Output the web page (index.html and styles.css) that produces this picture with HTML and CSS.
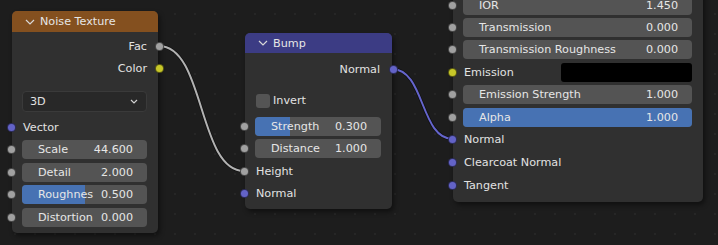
FILE: index.html
```html
<!DOCTYPE html>
<html lang="en">
<head>
    <meta charset="UTF-8">
    <title>Shader Nodes</title>
    <link rel="stylesheet" href="styles.css">
</head>
<body>

    <div class="editor">

        <svg class="links" width="718" height="245" viewBox="0 0 718 245">
            <path class="link-shadow" d="M159 46 C 205 46, 198 171, 244 171"/>
            <path class="link grey" d="M159 46 C 205 46, 198 171, 244 171"/>
            <path class="link-shadow" d="M392 69 C 425 69, 420 139, 453 139"/>
            <path class="link purple" d="M392 69 C 425 69, 420 139, 453 139"/>
        </svg>

        <!-- Noise Texture -->
        <div class="node noise">
            <div class="node-header">
                <svg class="chevron" width="10" height="6" viewBox="0 0 10 6"><polyline points="1,1 5,5 9,1"/></svg>
                Noise Texture
            </div>
            <div class="row out first">Fac<span class="socket grey right"></span></div>
            <div class="row out">Color<span class="socket yellow right"></span></div>
            <div class="dropdown">
                <span>3D</span>
                <svg width="8" height="5" viewBox="0 0 8 5"><polyline points="1,1 4,4 7,1"/></svg>
            </div>
            <div class="row in vector-row"><span class="socket purple left"></span>Vector</div>
            <div class="row field-row"><span class="socket grey left"></span>
                <div class="field"><span class="label">Scale</span><span class="value">44.600</span></div>
            </div>
            <div class="row field-row"><span class="socket grey left"></span>
                <div class="field"><span class="label">Detail</span><span class="value">2.000</span></div>
            </div>
            <div class="row field-row"><span class="socket grey left"></span>
                <div class="field"><div class="fill" style="width: 50%"></div><span class="label">Roughnes</span><span class="value">0.500</span></div>
            </div>
            <div class="row field-row"><span class="socket grey left"></span>
                <div class="field"><span class="label">Distortion</span><span class="value">0.000</span></div>
            </div>
        </div>

        <!-- Bump -->
        <div class="node bump">
            <div class="node-header">
                <svg class="chevron" width="10" height="6" viewBox="0 0 10 6"><polyline points="1,1 5,5 9,1"/></svg>
                Bump
            </div>
            <div class="row out first">Normal<span class="socket purple right"></span></div>
            <div class="row check-row"><span class="checkbox"></span>Invert</div>
            <div class="row field-row first-field"><span class="socket grey left"></span>
                <div class="field"><div class="fill" style="width: 28%"></div><span class="label">Strength</span><span class="value">0.300</span></div>
            </div>
            <div class="row field-row"><span class="socket grey left"></span>
                <div class="field"><span class="label">Distance</span><span class="value">1.000</span></div>
            </div>
            <div class="row in"><span class="socket grey left"></span>Height</div>
            <div class="row in"><span class="socket purple left"></span>Normal</div>
        </div>

        <!-- Principled BSDF (lower part) -->
        <div class="node principled">
            <div class="row field-row"><span class="socket grey left"></span>
                <div class="field"><span class="label">IOR</span><span class="value">1.450</span></div>
            </div>
            <div class="row field-row"><span class="socket grey left"></span>
                <div class="field"><span class="label">Transmission</span><span class="value">0.000</span></div>
            </div>
            <div class="row field-row"><span class="socket grey left"></span>
                <div class="field"><span class="label">Transmission Roughness</span><span class="value">0.000</span></div>
            </div>
            <div class="row in color-row"><span class="socket yellow left"></span>Emission<span class="swatch"></span></div>
            <div class="row field-row"><span class="socket grey left"></span>
                <div class="field"><span class="label">Emission Strength</span><span class="value">1.000</span></div>
            </div>
            <div class="row field-row"><span class="socket grey left"></span>
                <div class="field"><div class="fill" style="width: 100%"></div><span class="label">Alpha</span><span class="value">1.000</span></div>
            </div>
            <div class="row in"><span class="socket purple left"></span>Normal</div>
            <div class="row in"><span class="socket purple left"></span>Clearcoat Normal</div>
            <div class="row in"><span class="socket purple left"></span>Tangent</div>
        </div>

    </div>

</body>
</html>
```

FILE: styles.css
```css
body {
    margin: 0;
    padding: 0;
    background: #1d1d1d;
    font-family: "DejaVu Sans", sans-serif;
    font-size: 11.2px;
    color: #e2e2e2;
}

.editor {
    position: relative;
    width: 718px;
    height: 245px;
    overflow: hidden;
    background-color: #1d1d1d;
    background-image: radial-gradient(circle, #262626 1px, transparent 1.5px);
    background-size: 20px 20px;
    background-position: 5px 4px;
}

.links {
    position: absolute;
    left: 0;
    top: 0;
}

.link-shadow {
    fill: none;
    stroke: rgba(0, 0, 0, 0.45);
    stroke-width: 3.5;
}

.link {
    fill: none;
    stroke-width: 2;
}

.link.grey {
    stroke: #b2b2b2;
}

.link.purple {
    stroke: #6565cc;
}

.node {
    position: absolute;
    background: #303030;
    border-radius: 5px;
    box-shadow: 2px 3px 5px rgba(0, 0, 0, 0.45);
    box-sizing: border-box;
}

.node.noise {
    left: 12px;
    top: 11px;
    width: 146px;
    height: 222px;
}

.node.bump {
    left: 245px;
    top: 33px;
    width: 147px;
    height: 176px;
}

.node.principled {
    left: 453px;
    top: -12px;
    width: 250px;
    height: 214px;
    padding-top: 6px;
}

.node-header {
    height: 21px;
    display: flex;
    align-items: center;
    padding-left: 13px;
    border-radius: 5px 5px 0 0;
    color: #e6e6e6;
}

.noise .node-header {
    background: #84501f;
}

.bump .node-header {
    background: #3c3c84;
    height: 20px;
}

.chevron {
    margin-right: 5px;
    fill: none;
    stroke: #d8d8d8;
    stroke-width: 1.2;
}

.row {
    position: relative;
    height: 22.6px;
    display: flex;
    align-items: center;
}

.row.out {
    justify-content: flex-end;
    padding-right: 11px;
}

.row.in {
    padding-left: 11px;
}

.noise .row.first {
    margin-top: 3px;
}

.bump .row.out {
    margin-top: 5px;
    padding-right: 12px;
}

.socket {
    position: absolute;
    width: 9px;
    height: 9px;
    border-radius: 50%;
    box-sizing: border-box;
    border: 1px solid rgba(0, 0, 0, 0.55);
    top: 50%;
    margin-top: -4.5px;
}

.socket.left {
    left: -5.5px;
}

.socket.right {
    right: -5.5px;
}

.socket.grey {
    background: #a1a1a1;
}

.socket.yellow {
    background: #c7c729;
}

.socket.purple {
    background: #6363c7;
}

.dropdown {
    height: 21px;
    margin: 11px 11px 0 10px;
    background: #282828;
    border: 1px solid #3a3a3a;
    border-radius: 4px;
    box-sizing: border-box;
    display: flex;
    align-items: center;
    justify-content: space-between;
    padding: 0 8px 0 7px;
}

.dropdown svg {
    fill: none;
    stroke: #d0d0d0;
    stroke-width: 1.2;
}

.vector-row {
    margin-top: 4px;
}

.field-row {
    padding: 0 11px 0 10px;
    height: 22.4px;
}

.bump .first-field {
    margin-top: 3px;
}

.field {
    position: relative;
    flex: 1;
    height: 19px;
    background: #545454;
    border-radius: 4px;
    overflow: hidden;
    display: flex;
    align-items: center;
    justify-content: space-between;
    padding: 0 14px 0 16px;
    color: #e6e6e6;
}

.fill {
    position: absolute;
    left: 0;
    top: 0;
    bottom: 0;
    background: #4772b3;
}

.field span {
    position: relative;
    white-space: nowrap;
}

.check-row {
    margin-top: 9px;
    padding-left: 11px;
}

.checkbox {
    width: 14px;
    height: 14px;
    background: #545454;
    border-radius: 3px;
    margin-right: 3px;
}

.color-row .swatch {
    margin-left: auto;
    margin-right: 11px;
    width: 131px;
    height: 19px;
    background: #000;
    border-radius: 3px;
}
```
